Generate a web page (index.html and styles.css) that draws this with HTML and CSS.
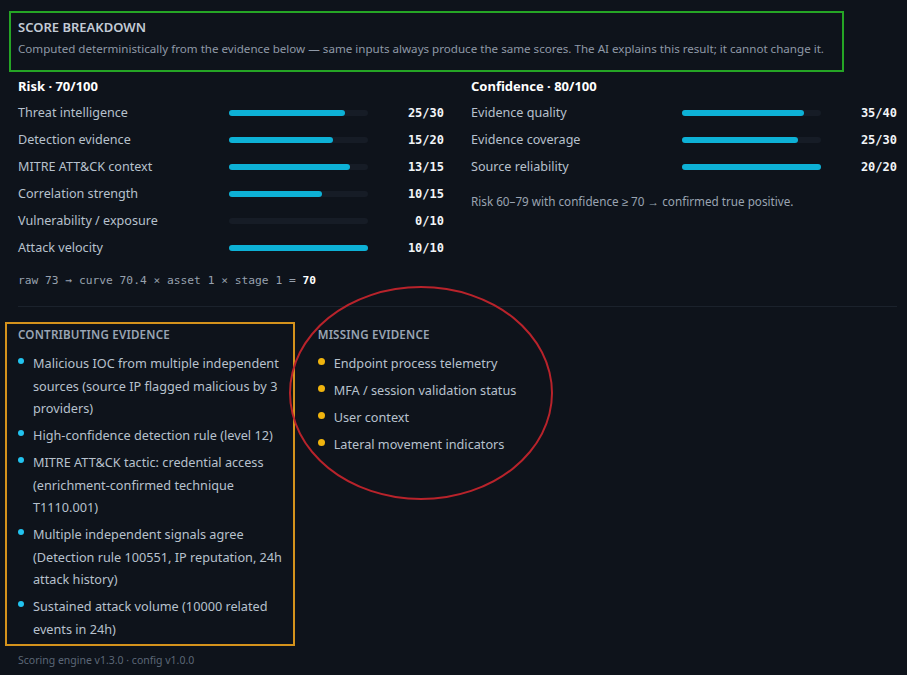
FILE: index.html
```html
<!DOCTYPE html>
<html lang="en">
<head>
    <meta charset="UTF-8">
    <meta name="viewport" content="width=device-width, initial-scale=1.0">
    <title>Score breakdown</title>
    <link rel="stylesheet" href="styles.css">
</head>
<body>
    <div class="panel">
        <div class="summary">
            <h2 class="summary-title">SCORE BREAKDOWN</h2>
            <p class="summary-text">Computed deterministically from the evidence below — same inputs always produce the same scores. The AI explains this result; it cannot change it.</p>
        </div>

        <div class="scores">
            <div class="score-col">
                <h3 class="score-head">Risk · 70/100</h3>
                <div class="row"><span class="label">Threat intelligence</span><span class="track"><span class="fill" style="width: 83.3%"></span></span><span class="value">25/30</span></div>
                <div class="row"><span class="label">Detection evidence</span><span class="track"><span class="fill" style="width: 75%"></span></span><span class="value">15/20</span></div>
                <div class="row"><span class="label">MITRE ATT&amp;CK context</span><span class="track"><span class="fill" style="width: 86.7%"></span></span><span class="value">13/15</span></div>
                <div class="row"><span class="label">Correlation strength</span><span class="track"><span class="fill" style="width: 66.7%"></span></span><span class="value">10/15</span></div>
                <div class="row"><span class="label">Vulnerability / exposure</span><span class="track"><span class="fill" style="width: 0%"></span></span><span class="value">0/10</span></div>
                <div class="row"><span class="label">Attack velocity</span><span class="track"><span class="fill" style="width: 100%"></span></span><span class="value">10/10</span></div>
                <p class="formula">raw 73 → curve 70.4 × asset 1 × stage 1 = <b>70</b></p>
            </div>
            <div class="score-col">
                <h3 class="score-head">Confidence · 80/100</h3>
                <div class="row"><span class="label">Evidence quality</span><span class="track"><span class="fill" style="width: 87.5%"></span></span><span class="value">35/40</span></div>
                <div class="row"><span class="label">Evidence coverage</span><span class="track"><span class="fill" style="width: 83.3%"></span></span><span class="value">25/30</span></div>
                <div class="row"><span class="label">Source reliability</span><span class="track"><span class="fill" style="width: 100%"></span></span><span class="value">20/20</span></div>
                <p class="verdict">Risk 60–79 with confidence ≥ 70 → confirmed true positive.</p>
            </div>
        </div>

        <hr class="divider">

        <div class="evidence">
            <div class="evidence-col contributing">
                <h4 class="evidence-title">CONTRIBUTING EVIDENCE</h4>
                <ul class="items">
                    <li><span class="dot"></span><span>Malicious IOC from multiple independent sources (source IP flagged malicious by 3 providers)</span></li>
                    <li><span class="dot"></span><span>High-confidence detection rule (level 12)</span></li>
                    <li><span class="dot"></span><span>MITRE ATT&amp;CK tactic: credential access (enrichment-confirmed technique T1110.001)</span></li>
                    <li><span class="dot"></span><span>Multiple independent signals agree (Detection rule 100551, IP reputation, 24h attack history)</span></li>
                    <li><span class="dot"></span><span>Sustained attack volume (10000 related events in 24h)</span></li>
                </ul>
            </div>
            <div class="evidence-col missing">
                <h4 class="evidence-title">MISSING EVIDENCE</h4>
                <ul class="items">
                    <li><span class="dot"></span><span>Endpoint process telemetry</span></li>
                    <li><span class="dot"></span><span>MFA / session validation status</span></li>
                    <li><span class="dot"></span><span>User context</span></li>
                    <li><span class="dot"></span><span>Lateral movement indicators</span></li>
                </ul>
            </div>
        </div>

        <p class="engine">Scoring engine v1.3.0 · config v1.0.0</p>
    </div>

    <div class="circle-mark"></div>
</body>
</html>
```

FILE: styles.css
```css
body {
    margin: 0;
    background-color: #0e131b;
    font-family: "Segoe UI", "Noto Sans", sans-serif;
    color: #b7c1cd;
}
.panel {
    padding: 11px 10px 0 18px;
}

/* header box */
.summary {
    width: fit-content;
    margin-left: -9px;
    border: 2px solid #25a525;
    padding: 5px 18px 13px 7px;
}
.summary-title {
    margin: 0;
    font-size: 13px;
    line-height: 18px;
    font-weight: 600;
    color: #c3cbd6;
}
.summary-text {
    margin: 5px 0 0;
    font-size: 11.6px;
    line-height: 16px;
    color: #8f99a7;
}

/* score bars */
.scores {
    display: grid;
    grid-template-columns: 1fr 1fr;
    column-gap: 27px;
    margin-top: 5px;
}
.score-head {
    margin: 0 0 4px;
    font-size: 13px;
    line-height: 18px;
    font-weight: 700;
    color: #ffffff;
}
.row {
    display: grid;
    grid-template-columns: 1fr 139px 64px;
    column-gap: 12px;
    align-items: center;
    height: 27px;
}
.label {
    font-size: 12.6px;
    color: #b7c1cd;
}
.track {
    display: block;
    height: 6px;
    border-radius: 3px;
    background-color: #161c26;
}
.fill {
    display: block;
    height: 100%;
    border-radius: 3px;
    background-color: #0db1d6;
}
.value {
    text-align: right;
    font-family: "DejaVu Sans Mono", monospace;
    font-size: 12px;
    font-weight: bold;
    color: #f2f5f8;
}
.formula {
    margin: 12px 0 0;
    font-family: "DejaVu Sans Mono", monospace;
    font-size: 11.25px;
    line-height: 16px;
    color: #97a1ae;
}
.formula b {
    color: #ffffff;
}
.verdict {
    margin: 13px 0 0;
    font-size: 11.7px;
    line-height: 16px;
    color: #9aa4b2;
}

.divider {
    margin: 17px 0 20px;
    border: none;
    border-top: 1px solid #1b222c;
}

/* evidence lists */
.evidence {
    display: grid;
    grid-template-columns: repeat(3, 1fr);
    column-gap: 20px;
    align-items: start;
}
.evidence-title {
    margin: 0;
    font-size: 11.6px;
    line-height: 16px;
    font-weight: 600;
    letter-spacing: 0.2px;
    color: #99a5b4;
}
.contributing {
    margin: -5px 3px 0 -13px;
    border: 2px solid #d4921c;
    padding: 3px 4px 4px 11px;
}
.items {
    list-style: none;
    margin: 9px 0 0;
    padding: 0;
}
.items li {
    display: flex;
    align-items: flex-start;
    gap: 9px;
    font-size: 12.7px;
    line-height: 22.5px;
    color: #b7c1cd;
    margin-bottom: 4.5px;
}
.items li:last-child {
    margin-bottom: 0;
}
.dot {
    flex: none;
    width: 6px;
    height: 6px;
    margin-top: 6px;
    border-radius: 50%;
    background-color: #22c3ef;
}
.missing .dot {
    width: 7px;
    height: 7px;
    background-color: #f0b40e;
}

.engine {
    margin: 6px 0 0;
    font-size: 10.5px;
    line-height: 16px;
    color: #5c6777;
}

/* red ring drawn over the missing list */
.circle-mark {
    position: absolute;
    left: 289px;
    top: 286px;
    width: 260px;
    height: 210px;
    border: 2px solid #b8232b;
    border-radius: 50%;
}
```
